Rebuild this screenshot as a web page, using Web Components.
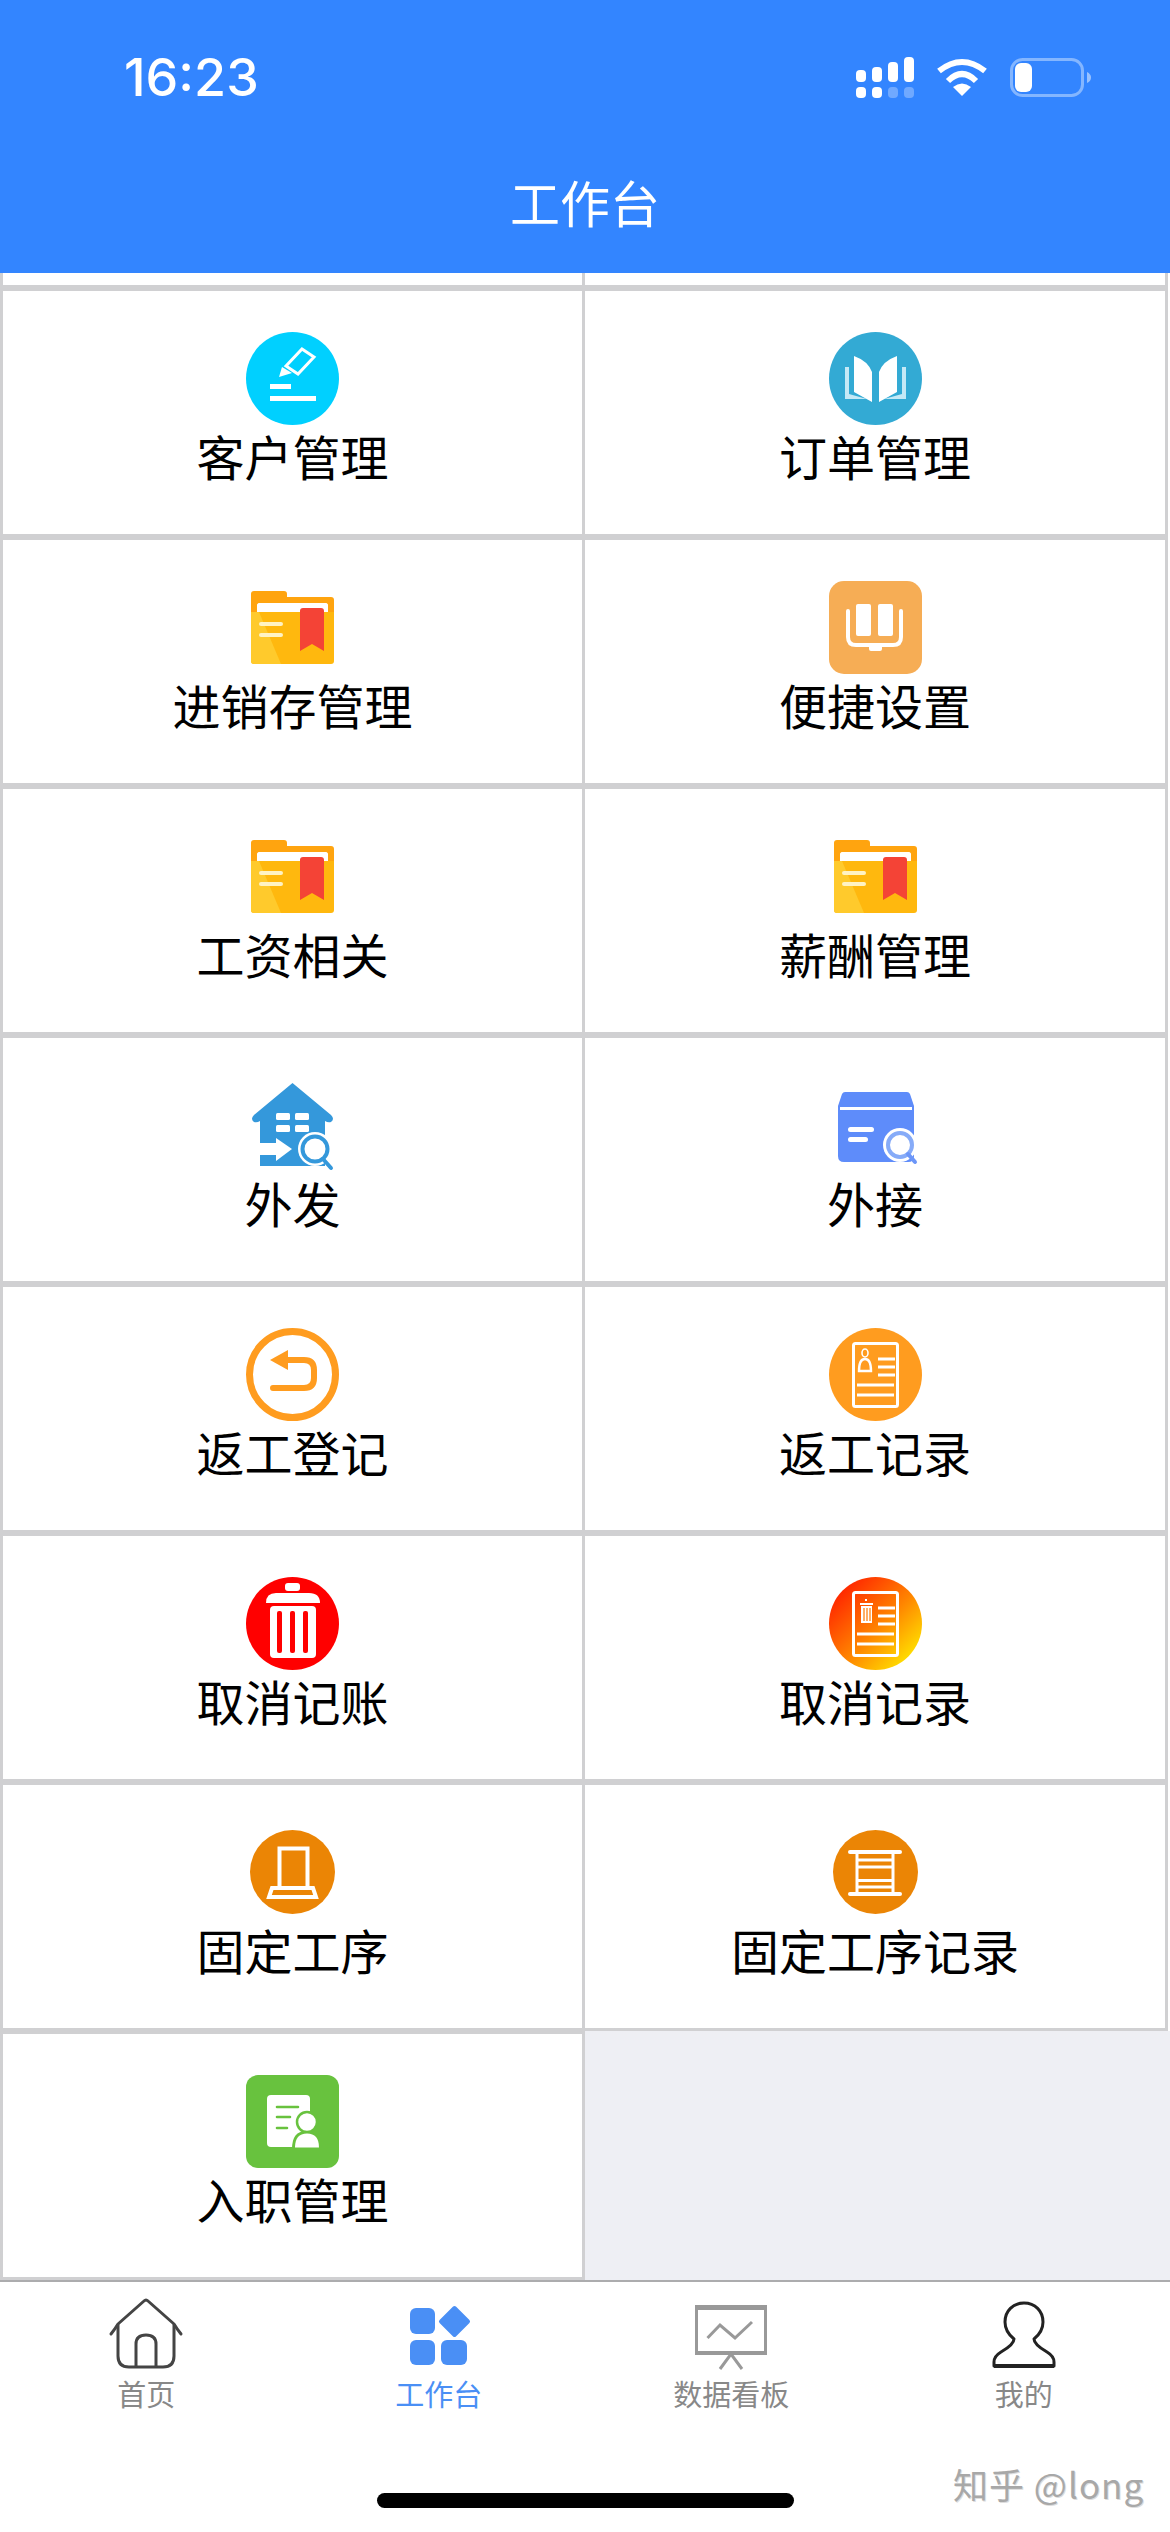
<!DOCTYPE html>
<html lang="zh-CN">
<head>
<meta charset="utf-8">
<title>工作台</title>
<style>
  html, body { margin: 0; padding: 0; }
  body {
    width: 1170px;
    height: 2532px;
    display: flex;
    flex-direction: column;
    overflow: hidden;
    font-family: "Noto Sans CJK SC", "Liberation Sans", sans-serif;
  }
</style>
</head>
<body>
  <app-header>工作台</app-header>
  <work-grid>
    <work-cell partial></work-cell>
    <work-cell partial></work-cell>
    <work-cell icon="pen">客户管理</work-cell>
    <work-cell icon="book">订单管理</work-cell>
    <work-cell icon="folder">进销存管理</work-cell>
    <work-cell icon="manual">便捷设置</work-cell>
    <work-cell icon="folder">工资相关</work-cell>
    <work-cell icon="folder">薪酬管理</work-cell>
    <work-cell icon="house">外发</work-cell>
    <work-cell icon="box">外接</work-cell>
    <work-cell icon="back">返工登记</work-cell>
    <work-cell icon="record">返工记录</work-cell>
    <work-cell icon="trash">取消记账</work-cell>
    <work-cell icon="cancelrecord">取消记录</work-cell>
    <work-cell icon="stand">固定工序</work-cell>
    <work-cell icon="ladder">固定工序记录</work-cell>
    <work-cell icon="entry">入职管理</work-cell>
    <work-cell empty></work-cell>
  </work-grid>
  <tab-bar>
    <tab-item icon="home">首页</tab-item>
    <tab-item icon="apps" active>工作台</tab-item>
    <tab-item icon="board">数据看板</tab-item>
    <tab-item icon="me">我的</tab-item>
  </tab-bar>

<script>
// bits shared by the two record icons
const docLines = `
  <rect x="24.5" y="15.5" width="44" height="63" rx="2" fill="none" stroke="#fff" stroke-width="3"/>
  <path d="M49 31H66M49 39H66M49 47H66M28 57H65M28 67H65" stroke="#fff" stroke-width="3" fill="none"/>`;

const folderIcon = `
  <path d="M5 13q0-3 3-3h30q3 0 3 3v3h44q3 0 3 3v20H5z" fill="#ffa40f"/>
  <rect x="11" y="22" width="71" height="14" rx="3" fill="#fff"/>
  <path d="M5 31h83v49q0 3-3 3H8q-3 0-3-3z" fill="#ffb80e"/>
  <path d="M5 31h8l22 52H8q-3 0-3-3z" fill="#ffca2c"/>
  <path d="M11 25q0-3 3-3h65q3 0 3 3v6H11z" fill="#fff"/>
  <rect x="13" y="41" width="24" height="4" rx="2" fill="#fff3c4"/>
  <rect x="13" y="52" width="24" height="4" rx="2" fill="#fff3c4"/>
  <path d="M54 30q0-3 3-3h18q3 0 3 3v40l-12-7-12 7z" fill="#f44336"/>`;

const icons = {
  pen: `
    <circle cx="46.5" cy="46.5" r="46.5" fill="#00d0ff"/>
    <path d="M56 17l12 8-16 17-12-8z" fill="none" stroke="#fff" stroke-width="3"/>
    <path d="M33 45l3-10 10 6z" fill="#fff"/>
    <rect x="24" y="52" width="21" height="5" fill="#fff"/>
    <rect x="24" y="64" width="46" height="5" fill="#fff"/>`,
  book: `
    <circle cx="46.5" cy="46.5" r="46.5" fill="#33aad4"/>
    <path d="M16 35h4v27l18 5H16zM77 35h-4v27l-18 5h22z" fill="#c5e9f6"/>
    <path d="M25 24q14 5 18 16v30L25 60zM68 24q-14 5-18 16v30l18-10z" fill="#fff"/>`,
  folder: folderIcon,
  manual: `
    <rect width="93" height="93" rx="15" fill="#f6ad55"/>
    <rect x="27" y="23" width="15" height="32" rx="2" fill="#fff"/>
    <rect x="49" y="23" width="15" height="32" rx="2" fill="#fff"/>
    <path d="M19 30v26q0 8 8 8h37q8 0 8-8V30" fill="none" stroke="#fff" stroke-width="4" stroke-linecap="round"/>
    <rect x="40" y="64" width="13" height="6" rx="2" fill="#fff"/>`,
  house: `
    <path d="M46.5 4L85 36q4 4 0 7-3 1-6-1v45H14V42q-3 2-6 1-4-3 0-7z" fill="#3498db"/>
    <rect x="30" y="34" width="14" height="7" rx="1.5" fill="#fff"/>
    <rect x="49" y="34" width="14" height="7" rx="1.5" fill="#fff"/>
    <rect x="30" y="46" width="14" height="7" rx="1.5" fill="#fff"/>
    <rect x="49" y="46" width="14" height="7" rx="1.5" fill="#fff"/>
    <path d="M14 64h16v-5l16 11-16 12v-6H14z" fill="#fff"/>
    <circle cx="69" cy="70" r="17" fill="#fff"/>
    <circle cx="69" cy="70" r="12.5" fill="#fff" stroke="#3498db" stroke-width="4"/>
    <path d="M77 80l8 9" stroke="#3498db" stroke-width="4" stroke-linecap="round"/>`,
  box: `
    <path d="M16 13h62q2 0 3 2l4 12v50q0 6-6 6H15q-6 0-6-6V27l4-12q1-2 3-2z" fill="#5e8cfa"/>
    <rect x="11" y="28" width="72" height="3" fill="#fff"/>
    <rect x="19" y="48" width="26" height="5" rx="2.5" fill="#fff"/>
    <rect x="19" y="58" width="20" height="5" rx="2.5" fill="#fff"/>
    <circle cx="71" cy="66" r="17" fill="#fff"/>
    <circle cx="71" cy="66" r="12" fill="#fff" stroke="#86abf8" stroke-width="4"/>
    <path d="M79 75l7 8" stroke="#6c96f8" stroke-width="4" stroke-linecap="round"/>`,
  back: `
    <circle cx="46.5" cy="46.5" r="43" fill="#fff" stroke="#ff9c1f" stroke-width="7"/>
    <path d="M24 32l18-10v20z" fill="#ff9c1f"/>
    <path d="M40 32h18q10 0 10 10v8q0 10-10 10H27" fill="none" stroke="#ff9c1f" stroke-width="6" stroke-linecap="round"/>`,
  record: `
    <circle cx="46.5" cy="46.5" r="46.5" fill="#ff9c1f"/>
    ${docLines}
    <ellipse cx="36" cy="25" rx="3" ry="4" fill="none" stroke="#fff" stroke-width="1.6"/>
    <path d="M30 43q0-12 6-12t6 12z" fill="none" stroke="#fff" stroke-width="2.4"/>`,
  trash: `
    <circle cx="46.5" cy="46.5" r="46.5" fill="#ff0000"/>
    <rect x="39" y="6" width="15" height="8" rx="3" fill="#fff"/>
    <path d="M20 26q0-10 10-10h33q11 0 11 10z" fill="#fff"/>
    <rect x="24" y="29" width="46" height="52" rx="4" fill="#fff"/>
    <rect x="31" y="34" width="5" height="42" rx="2" fill="#ff0000"/>
    <rect x="44" y="34" width="5" height="42" rx="2" fill="#ff0000"/>
    <rect x="57" y="34" width="5" height="42" rx="2" fill="#ff0000"/>`,
  cancelrecord: `
    <defs><linearGradient id="g" x1="0.1" y1="0.1" x2="0.9" y2="0.9">
      <stop offset="0" stop-color="#ff1f00"/><stop offset=".55" stop-color="#ff8500"/><stop offset="1" stop-color="#ffe600"/>
    </linearGradient></defs>
    <circle cx="46.5" cy="46.5" r="46.5" fill="url(#g)"/>
    ${docLines}
    <path d="M36 23h2M31 27h13" stroke="#fff" stroke-width="2"/>
    <path d="M32 29h11v17H32z" fill="#fff"/>
    <path d="M35 31v13M38 31v13M41 31v13" stroke="#ff7a00" stroke-width="1.2"/>`,
  stand: `
    <ellipse cx="46.5" cy="46" rx="42.5" ry="42" fill="#eb8505"/>
    <path d="M33.5 61V22.5h28V61" fill="none" stroke="#fff" stroke-width="4"/>
    <path d="M26 62h41l3 9H23z" fill="none" stroke="#fff" stroke-width="4"/>`,
  ladder: `
    <ellipse cx="46.5" cy="46" rx="42.5" ry="42" fill="#eb8505"/>
    <rect x="19" y="24" width="54" height="4" rx="2" fill="#fff"/>
    <rect x="19" y="66" width="54" height="4" rx="2" fill="#fff"/>
    <path d="M28 28v38M64 28v38" stroke="#fff" stroke-width="3"/>
    <path d="M28 34h36M28 41h36M28 54.500h36M28 61h36" stroke="#fff" stroke-width="3"/>`,
  entry: `
    <rect width="93" height="93" rx="12" fill="#68c23e"/>
    <rect x="21" y="20" width="43" height="52" rx="4" fill="#fff"/>
    <path d="M31 32h21M31 42h13M31 53h10" stroke="#68c23e" stroke-width="2.6" stroke-linecap="round"/>
    <circle cx="61" cy="47" r="10" fill="#fff" stroke="#68c23e" stroke-width="2.500"/>
    <path d="M46 74q0-18 14-18h1q13 0 13 18z" fill="#68c23e"/>
    <path d="M49 72.500q0-14 12-14t12 14z" fill="#fff"/>`
};

const tabIcons = {
  home: `
    <g fill="none" stroke="#444" stroke-width="3" stroke-linecap="round" stroke-linejoin="round">
      <path d="M5 38Q9 33 12 28L38 5Q40 3 42 5L68 28Q71 33 75 38"/>
      <path d="M12 29V60Q12 71 23 71H57Q68 71 68 60V29"/>
      <path d="M30 70V48Q30 39 40 39T50 48V70"/>
    </g>`,
  apps: `
    <g fill="#4a8ff5">
      <rect x="11" y="12" width="25" height="26" rx="6"/>
      <path d="M55.500 12L69 25.500 55.500 39 42 25.500z" stroke="#4a8ff5" stroke-width="4" stroke-linejoin="round"/>
      <rect x="11" y="44" width="25" height="25" rx="6"/>
      <rect x="42" y="44" width="26" height="25" rx="6"/>
    </g>`,
  board: `
    <g fill="none" stroke="#999" stroke-width="3">
      <rect x="5.500" y="11" width="69" height="46" rx="1"/>
      <path d="M4 11.500H76" stroke-width="5"/>
      <path d="M4 57H76" stroke-width="4"/>
      <path d="M29 73L40 58 51 73"/>
      <path d="M16.500 42L29 29 44 42 61 26"/>
    </g>`,
  me: `
    <path d="M40 7C29 7 21 15 21 26 21 34 25 39 30 43 30 48 24 52 17 56 12 59 10 62 10 66V70H70V66C70 62 68 59 63 56 56 52 50 48 50 43 55 39 59 34 59 26 59 15 51 7 40 7Z" fill="none" stroke="#222" stroke-width="3" stroke-linejoin="round"/>
    <path d="M10 70H70" stroke="#222" stroke-width="4"/>`
};

class AppHeader extends HTMLElement {
  constructor() {
    super();
    this.attachShadow({ mode: 'open' });
    this.shadowRoot.innerHTML = `
      <style>
        :host {
          display: block;
          flex: none;
          height: 273px;
          background: #3385ff;
          color: #fff;
          position: relative;
          z-index: 1;
        }
        .status {
          height: 155px;
          display: flex;
          align-items: center;
          justify-content: space-between;
          padding: 0 79px 0 124px;
        }
        .time {
          font: 500 52px/1 Inter, "Liberation Sans", sans-serif;
        }
        .title {
          height: 92px;
          display: flex;
          align-items: center;
          justify-content: center;
          font-size: 50px;
          font-weight: 400;
        }
        svg { display: block; }
      </style>
      <div class="status">
        <span class="time">16:23</span>
        <svg width="235" height="42" viewBox="0 0 235 42" fill="#fff">
          <rect x="0" y="13" width="10" height="12" rx="4"/>
          <rect x="16" y="10" width="10" height="15" rx="4"/>
          <rect x="32" y="5" width="10" height="20" rx="4"/>
          <rect x="48" y="0" width="10" height="25" rx="4"/>
          <rect x="0" y="30" width="10" height="11" rx="4"/>
          <rect x="16" y="30" width="10" height="11" rx="4"/>
          <rect x="32" y="30" width="10" height="11" rx="4" opacity=".3"/>
          <rect x="48" y="30" width="10" height="11" rx="4" opacity=".3"/>
          <g transform="translate(81 1)">
            <path d="M2 13Q25-5 48 13M11 23Q25 9 39 23" fill="none" stroke="#fff" stroke-width="6"/>
            <path d="M25 38L16 29Q25 22 34 29Z"/>
          </g>
          <rect x="155.500" y="2.500" width="71" height="36" rx="11" fill="none" stroke="#fff" stroke-opacity=".4" stroke-width="3"/>
          <rect x="159" y="6" width="17" height="29" rx="6"/>
          <path d="M231 15q4 2 4 5.500t-4 5.500z" opacity=".5"/>
        </svg>
      </div>
      <div class="title"><slot></slot></div>
    `;
  }
}

class WorkGrid extends HTMLElement {
  constructor() {
    super();
    this.attachShadow({ mode: 'open' });
    this.shadowRoot.innerHTML = `
      <style>
        :host {
          display: block;
          flex: none;
          height: 2007px;
          background: #eeeff4;
          overflow: hidden;
        }
        .grid {
          display: grid;
          grid-template-columns: 582px 586px;
          grid-auto-rows: max-content;
        }
      </style>
      <div class="grid"><slot></slot></div>
    `;
  }
}

class WorkCell extends HTMLElement {
  constructor() {
    super();
    this.attachShadow({ mode: 'open' });
    this.shadowRoot.innerHTML = `
      <style>
        :host {
          display: flex;
          flex-direction: column;
          align-items: center;
          box-sizing: border-box;
          height: 249px;
          padding-top: 41px;
          background: #fff;
          border: 3px solid #d0d0d2;
          border-right: 0;
          color: #000;
          font-size: 48px;
          line-height: 60px;
        }
        :host(:nth-child(even)) {
          border-right: 3px solid #d0d0d2;
          box-shadow: 2px 0 0 #fff;
        }
        :host([partial]) {
          height: 15px;
          padding-top: 0;
          border-top: 0;
        }
        :host([empty]) {
          background: transparent;
          border-top: 0;
          border-bottom: 0;
          border-right: 0;
          box-shadow: none;
        }
        svg { display: block; }
      </style>
      <span id="icon"></span>
      <slot></slot>
    `;
  }

  connectedCallback() {
    const markup = icons[this.getAttribute('icon')];
    this.shadowRoot.getElementById('icon').innerHTML = markup
      ? `<svg width="93" height="93" viewBox="0 0 93 93">${markup}</svg>`
      : '';
  }
}

class TabBar extends HTMLElement {
  constructor() {
    super();
    this.attachShadow({ mode: 'open' });
    this.shadowRoot.innerHTML = `
      <style>
        :host {
          display: flex;
          flex-direction: column;
          flex: none;
          box-sizing: border-box;
          height: 252px;
          background: #fff;
          border-top: 2px solid #acacae;
          position: relative;
        }
        .tabs {
          display: grid;
          grid-template-columns: repeat(4, 1fr);
          padding-top: 14px;
        }
        .indicator {
          width: 417px;
          height: 15px;
          border-radius: 8px;
          background: #000;
          align-self: center;
          margin-top: auto;
          margin-bottom: 24px;
        }
        .mark {
          position: absolute;
          left: 953px;
          top: 177px;
          font-size: 35px;
          line-height: 50px;
          letter-spacing: 1px;
          color: #a8a8a8;
          white-space: nowrap;
          text-shadow: 1px 1px 0 #ddd;
        }
      </style>
      <div class="tabs"><slot></slot></div>
      <div class="indicator"></div>
      <div class="mark">知乎 @long</div>
    `;
  }
}

class TabItem extends HTMLElement {
  constructor() {
    super();
    this.attachShadow({ mode: 'open' });
    this.shadowRoot.innerHTML = `
      <style>
        :host {
          display: flex;
          flex-direction: column;
          align-items: center;
          font-size: 29px;
          line-height: 36px;
          color: #888;
        }
        :host([active]) { color: #4a8ff5; }
        svg { display: block; margin-bottom: 5px; }
      </style>
      <span id="icon"></span>
      <slot></slot>
    `;
  }

  connectedCallback() {
    const markup = tabIcons[this.getAttribute('icon')];
    this.shadowRoot.getElementById('icon').innerHTML =
      `<svg width="80" height="74" viewBox="0 0 80 74">${markup}</svg>`;
  }
}

customElements.define('app-header', AppHeader);
customElements.define('work-grid', WorkGrid);
customElements.define('work-cell', WorkCell);
customElements.define('tab-bar', TabBar);
customElements.define('tab-item', TabItem);
</script>
</body>
</html>
